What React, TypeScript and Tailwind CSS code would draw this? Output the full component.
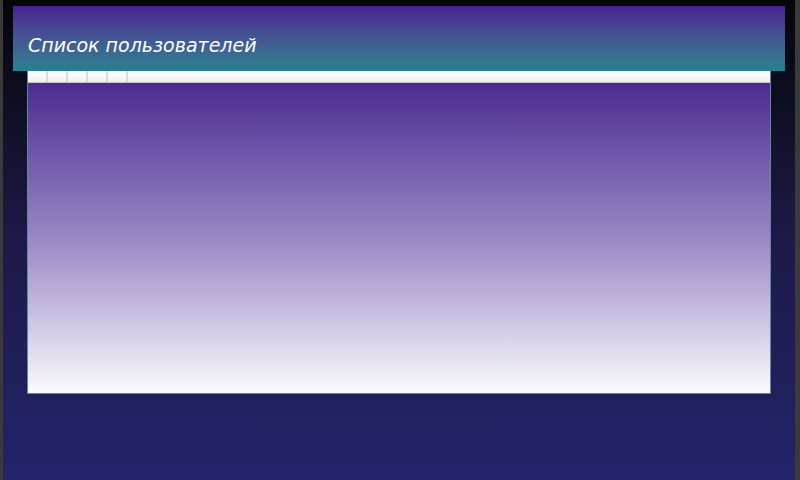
export default function App() {
  const cells = [0, 1, 2, 3, 4];
  return (
    <div className="w-[800px] h-[480px] overflow-hidden border-l-[3px] border-r-[5px] border-[#3a3a3a] bg-gradient-to-b from-[#060609] via-[#1c1a48] to-[#24236a] pt-[6px] flex flex-col">
      <div className="mx-[10px] h-[65px] bg-gradient-to-b from-[#4a1f90] to-[#24828f] flex items-end pb-[16px] pl-[15px]">
        <span
          className="text-white italic font-extralight text-[19px] leading-none"
          style={{ fontFamily: '"DejaVu Sans", sans-serif' }}
        >
          Список пользователей
        </span>
      </div>
      <div className="mx-[24px] h-[323px] border border-[#5b8aa6] border-t-0 flex flex-col">
        <div className="h-[12px] bg-gradient-to-b from-white to-[#f0f0f0] border-b border-[#c8c8c8] flex">
          {cells.map((c) => (
            <div key={c} className="w-[20px] h-full border-r-2 border-[#dcdcdc]" />
          ))}
        </div>
        <div className="flex-1 bg-gradient-to-b from-[#4d2a90] via-[#9a88c4] to-[#fbfbfc]" />
      </div>
    </div>
  );
}
